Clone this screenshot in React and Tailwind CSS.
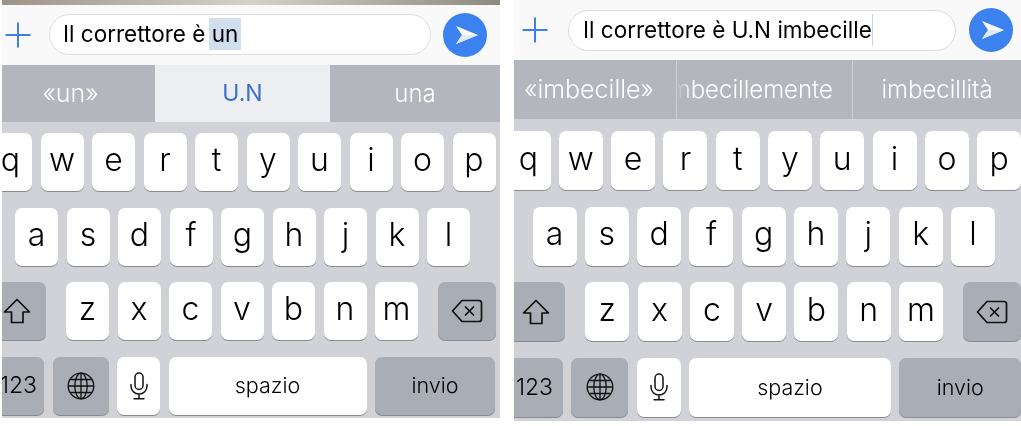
import React from "react";

const FONT = "font-['Inter','Liberation_Sans',sans-serif]";

const PlusIcon = () => (
  <svg width="26" height="26" viewBox="0 0 26 26" fill="none" stroke="#3d80ea" strokeWidth="2">
    <path d="M0.5 13H25.5M13 0.5V25.5" />
  </svg>
);

const SendButton = () => (
  <div className="w-11 h-11 shrink-0 rounded-full bg-[#3b82f0]">
    <svg width="44" height="44" viewBox="0 0 44 44">
      <path d="M13 13L35 22L13 31L19 22Z" fill="#fff" />
      <path d="M19 22H35L13 31Z" fill="#dfe9fb" />
    </svg>
  </div>
);

const ShiftIcon = () => (
  <svg width="28" height="26" viewBox="0 0 28 26" fill="none" stroke="#111" strokeWidth="1.7" strokeLinejoin="round">
    <path d="M14 1.5L26.5 14H20V24.5H8.5V14H1.5Z" />
  </svg>
);

const DeleteIcon = () => (
  <svg width="32" height="24" viewBox="0 0 32 24" fill="none" stroke="#111" strokeWidth="1.7" strokeLinejoin="round" strokeLinecap="round">
    <path d="M11 1.5H28C29.5 1.5 30.5 2.5 30.5 4V20C30.5 21.5 29.5 22.5 28 22.5H11L1.5 12Z" />
    <path d="M14.5 8L22.5 16M22.5 8L14.5 16" />
  </svg>
);

const GlobeIcon = () => (
  <svg width="28" height="28" viewBox="0 0 28 28" fill="none" stroke="#111" strokeWidth="1.3">
    <circle cx="14" cy="14" r="12.8" />
    <ellipse cx="14" cy="14" rx="6.2" ry="12.8" />
    <path d="M14 1.2V26.8M1.2 14H26.8M3.2 7.5H24.8M3.2 20.5H24.8" />
  </svg>
);

const MicIcon = () => (
  <svg width="18" height="28" viewBox="0 0 18 28" fill="none" stroke="#111" strokeWidth="1.5" strokeLinecap="round">
    <rect x="5" y="1" width="8" height="16.5" rx="4" />
    <path d="M1 12.5V14C1 18.5 4.5 22 9 22C13.5 22 17 18.5 17 14V12.5M9 22V26.5M4 26.8H14" />
  </svg>
);

const Key = ({ className, dark, children }) => (
  <div
    className={`${className} h-full shrink-0 flex items-center justify-center rounded-[7px] shadow-[0_1px_0_#888b91] text-black ${
      dark ? "bg-[#a9adb6]" : "bg-white"
    }`}
  >
    {children}
  </div>
);

const Letters = ({ keys, w }) =>
  keys.split("").map((k) => (
    <Key key={k} className={w}>
      <span className="text-[32px] font-light leading-none -translate-y-[2px]">{k}</span>
    </Key>
  ));

const LeftPanel = () => (
  <div className="w-[498px] h-[418px] ml-[2px] shrink-0 flex flex-col overflow-hidden">
    <div className="h-[5px] shrink-0 bg-gradient-to-r from-[#9d9488] via-[#d6d2c6] to-[#8f8a80]" />
    <div className="h-[60px] shrink-0 flex items-center bg-[#f9f9f9] pl-[3px]">
      <PlusIcon />
      <div className="ml-[18px] w-[382px] h-[41px] shrink-0 rounded-full bg-white border border-[#dcdcdc] flex items-center pl-[13px] text-[22.5px] text-black -translate-y-[1px]">
        <span className="whitespace-pre">Il correttore è </span>
        <span className="bg-[#d0deee] h-[32px] leading-[32px] -ml-[3px] px-[3px]">un</span>
      </div>
      <div className="ml-[12px]">
        <SendButton />
      </div>
    </div>
    <div className="h-[57px] shrink-0 flex text-[24px] font-light">
      <div className="w-[153px] bg-[#b3b6bc] text-white text-[25px] flex items-center justify-center pr-4">«un»</div>
      <div className="w-[175px] bg-[#eceef1] text-[#3a6fd0] text-[23px] font-normal flex items-center justify-center">U.N</div>
      <div className="flex-1 bg-[#b3b6bc] text-white flex items-center justify-center">una</div>
    </div>
    <div className="flex-1 bg-[#d0d2d7] pt-[11px] flex flex-col gap-[16.5px]">
      <div className="h-[58px] flex gap-[8.5px] -ml-[13px]">
        <Letters keys="qwertyuiop" w="w-[43px]" />
      </div>
      <div className="h-[58px] flex gap-[8.5px] pl-[13px]">
        <Letters keys="asdfghjkl" w="w-[43px]" />
      </div>
      <div className="h-[58px] flex gap-[8.5px]">
        <Key dark className="w-[58px] -ml-[14px] mr-[11.5px]">
          <ShiftIcon />
        </Key>
        <Letters keys="zxcvbnm" w="w-[43px]" />
        <Key dark className="w-[58px] ml-[11.5px]">
          <DeleteIcon />
        </Key>
      </div>
      <div className="h-[58px] flex gap-[8.5px] text-[21.5px] font-light">
        <Key dark className="w-[51px] -ml-[9px]">
          <span className="text-[23px]">123</span>
        </Key>
        <Key dark className="w-[56px]">
          <GlobeIcon />
        </Key>
        <Key className="w-[43px]">
          <MicIcon />
        </Key>
        <Key className="w-[198px]">spazio</Key>
        <Key dark className="w-[120px]">invio</Key>
      </div>
    </div>
  </div>
);

const RightPanel = () => (
  <div className="w-[507px] h-[421px] ml-[14px] shrink-0 flex flex-col overflow-hidden">
    <div className="h-[60px] shrink-0 flex items-center bg-[#f9f9f9] pl-[8px]">
      <PlusIcon />
      <div className="ml-[20px] w-[388px] h-[41px] shrink-0 rounded-full bg-white border border-[#dcdcdc] flex items-center pl-[14px] text-[22.5px] text-black">
        <span className="whitespace-pre">Il correttore è U.N imbecille</span>
        <span className="w-[1px] h-[32px] bg-[#c4d3f0]" />
      </div>
      <div className="ml-[13px]">
        <SendButton />
      </div>
    </div>
    <div className="h-[59px] shrink-0 flex gap-[1px] bg-[#cdcfd4] text-[24px] font-light text-white">
      <div className="w-[162px] bg-[#b3b6bc] text-[25px] flex items-center justify-center pr-3">«imbecille»</div>
      <div className="relative w-[175px] bg-[#b3b6bc] overflow-hidden flex items-center justify-end pr-[19px] whitespace-nowrap">
        imbecillemente
        <div className="absolute left-0 top-0 bottom-0 w-[14px] bg-gradient-to-r from-[#b3b6bc] to-transparent" />
      </div>
      <div className="flex-1 bg-[#b3b6bc] flex items-center justify-center">imbecillità</div>
    </div>
    <div className="flex-1 bg-[#d0d2d7] pt-[12px] flex flex-col gap-[16.5px]">
      <div className="h-[59px] flex gap-[8.3px] -ml-[7.5px]">
        <Letters keys="qwertyuiop" w="w-[44px]" />
      </div>
      <div className="h-[59px] flex gap-[8.3px] pl-[18.5px]">
        <Letters keys="asdfghjkl" w="w-[44px]" />
      </div>
      <div className="h-[59px] flex gap-[8.3px]">
        <Key dark className="w-[58px] -ml-[7px] mr-[12px]">
          <ShiftIcon />
        </Key>
        <Letters keys="zxcvbnm" w="w-[44px]" />
        <Key dark className="w-[58px] ml-[11.7px]">
          <DeleteIcon />
        </Key>
      </div>
      <div className="h-[59px] flex gap-[8.3px] text-[21.5px] font-light">
        <Key dark className="w-[57px] -ml-[8px]">
          <span className="text-[23px]">123</span>
        </Key>
        <Key dark className="w-[57px]">
          <GlobeIcon />
        </Key>
        <Key className="w-[44px]">
          <MicIcon />
        </Key>
        <Key className="w-[202px]">spazio</Key>
        <Key dark className="w-[122px]">invio</Key>
      </div>
    </div>
  </div>
);

export default function App() {
  return (
    <div className={`${FONT} w-[1021px] h-[426px] bg-white flex items-start overflow-hidden blur-[0.35px]`}>
      <LeftPanel />
      <RightPanel />
    </div>
  );
}
